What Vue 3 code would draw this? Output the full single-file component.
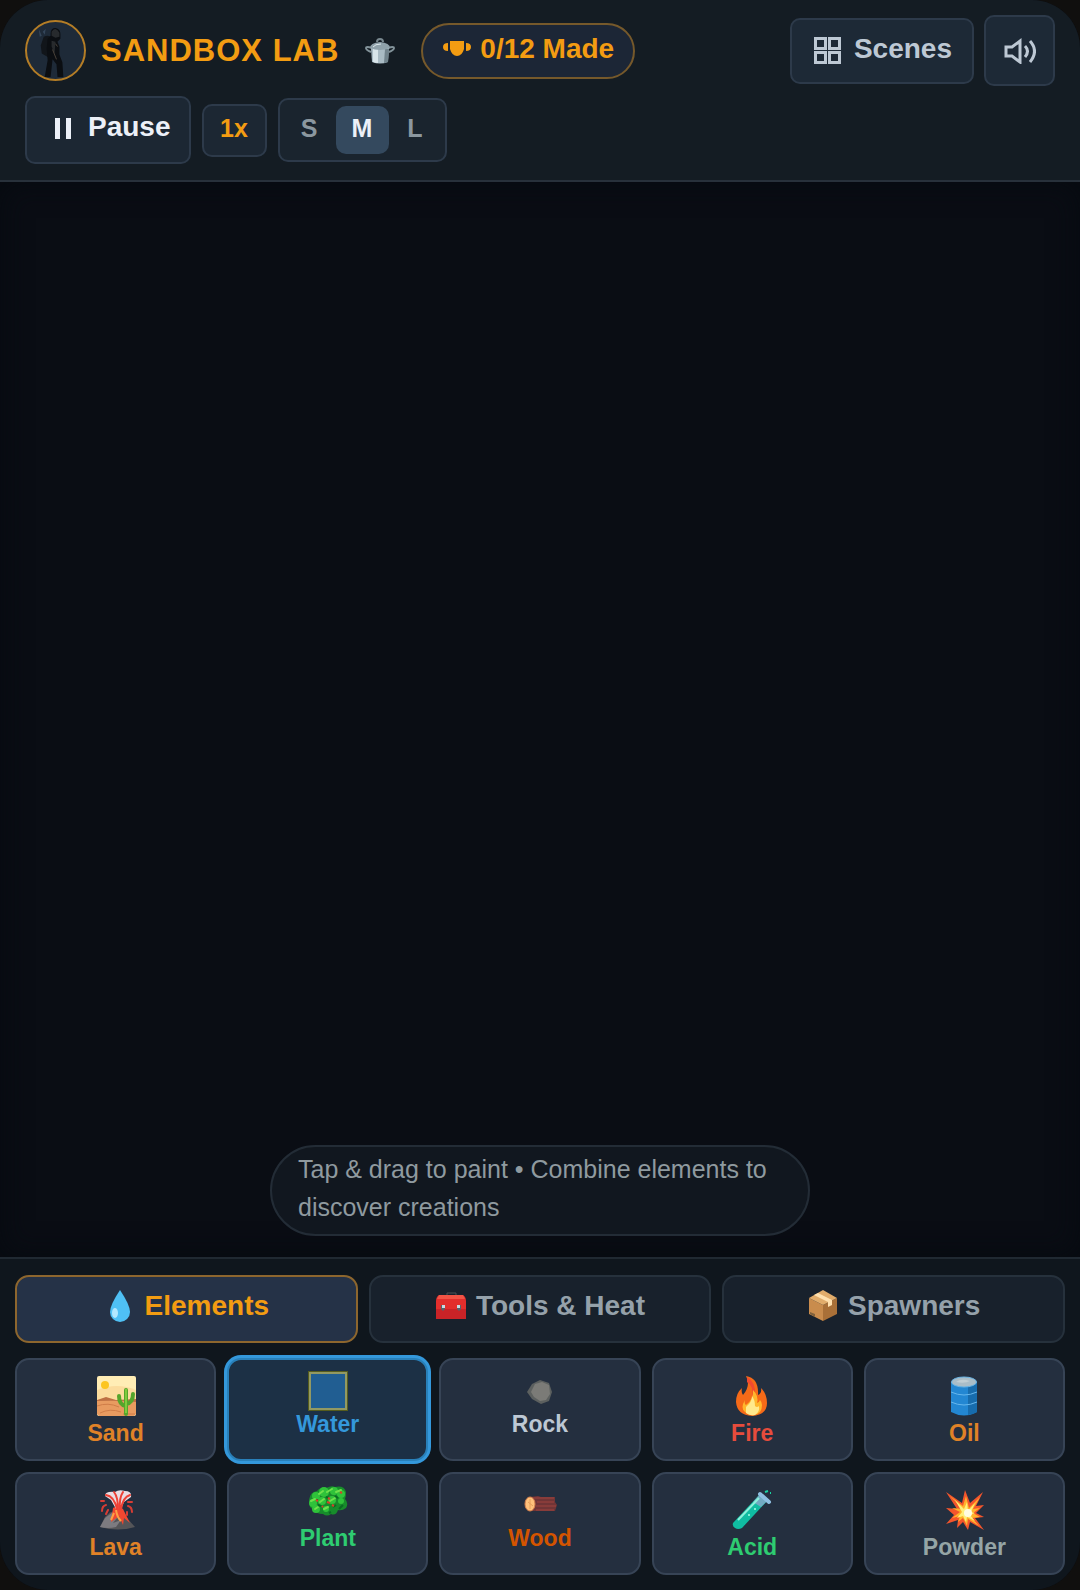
<template>
  <div class="app">
    <header class="topbar">
      <div class="row">
        <div class="avatar">
          <svg viewBox="0 0 58 58" aria-hidden="true">
            <path d="M12 7l3 7-2 1zM16 10l3-3-1 6z" fill="#34465a" />
            <path d="M17 15q6-3 9 2l-1 15-3 4-7-4-1-8z" fill="#11151a" />
            <path d="M24 12q0-6 5-6 5 1 5 6v5l-3 3 2 5v8l3 8 1 15h-6l-1-13-4-5-1 9-1 9h-6l3-17-1-12 1-10 3-3z" fill="#0b0e12" />
            <path d="M25 10q4-6 8 1v4l-4 1-4-2zM25 19l4 1-1 12-3-7z" fill="#272a2d" />
            <path d="M26 28l4 10M29 22l2 3" stroke="#4b433b" fill="none" />
          </svg>
        </div>
        <h1>SANDBOX LAB</h1>
        <svg class="pot" viewBox="0 0 30 28" aria-hidden="true">
          <path d="M7 11Q1 9 1 11q0 2 5 4M23 11q6-2 6 0 0 2-5 4" fill="none" stroke="#829299" stroke-width="2" />
          <path d="M6 11h18l-1 14q-8 3-16 0z" fill="#a9bbc4" />
          <path d="M8 12h5v14q-3 0-5-1z" fill="#d8e5ea" />
          <path d="M20 12h4l-1 13-4 1z" fill="#71838c" />
          <path d="M5 11q0-5 10-6 10 1 10 6-10 4-20 0z" fill="#8fa1aa" />
          <path d="M8 10q2-3 8-3" stroke="#dce7eb" fill="none" />
          <path d="M12 5q0-3 3-3t3 3" stroke="#78878e" stroke-width="2" fill="none" />
        </svg>
        <button class="badge">
          <svg viewBox="0 0 28 20" aria-hidden="true">
            <path d="M7 2h14v8q-2 7-7 7t-7-7z" />
            <path d="M5 4v8Q0 12 0 8q0-4 5-4zM23 4v8q5 0 5-4 0-4-5-4z" />
          </svg>
          <span>0/12 Made</span>
        </button>
        <div class="right">
          <button class="scenes">
            <svg viewBox="0 0 27 27" aria-hidden="true">
              <path d="M1.5 1.5h10v10h-10zM15.500 1.500h10v10h-10zM1.500 15.500h10v10h-10zM15.500 15.500h10v10h-10z" />
            </svg>
            <span>Scenes</span>
          </button>
          <button class="sound" aria-label="Sound" @click="muted = !muted">
            <svg viewBox="0 0 32 26" aria-hidden="true">
              <path d="M2 9h6l8-6v21l-8-6H2z" />
              <path v-if="!muted" d="M21 8q5 5 0 11M26 3q9 10 0 21" />
            </svg>
          </button>
        </div>
      </div>
      <div class="row controls">
        <button class="pause" @click="paused = !paused">
          <svg viewBox="0 0 24 24" aria-hidden="true">
            <path v-if="!paused" d="M4 1h5v21H4zM15 1h5v21h-5z" />
            <path v-else d="M5 1l16 11L5 23z" />
          </svg>
          <span>{{ paused ? 'Play' : 'Pause' }}</span>
        </button>
        <button class="speed" @click="speed = speed % 3 + 1">{{ speed }}x</button>
        <div class="sizes">
          <button v-for="s in sizes" :key="s" :class="{ active: s === size }" @click="size = s">{{ s }}</button>
        </div>
      </div>
    </header>

    <main class="stage">
      <p class="hint">Tap &amp; drag to paint • Combine elements to discover creations</p>
    </main>

    <footer class="panel">
      <nav class="tabs">
        <button v-for="t in tabs" :key="t.id" :class="{ active: t.id === tab }" @click="tab = t.id">
          <svg v-if="t.id === 'elements'" viewBox="0 0 32 32" aria-hidden="true">
            <path d="M16 0q-10 15-10 22a10 10 0 0 0 20 0Q26 15 16 0z" fill="#4fc0f5" />
            <ellipse cx="11" cy="23" rx="3" ry="5" fill="#b4e8ff" />
          </svg>
          <svg v-else-if="t.id === 'tools'" viewBox="0 0 32 32" aria-hidden="true">
            <path d="M12 6V3h9v3" fill="none" stroke="#4c5355" stroke-width="1" />
            <path d="M4 5h24q3 2 3 6v18H1V11q0-4 3-6z" fill="#e32e2c" />
            <path d="M4 5h24l2 4H2z" fill="#f15345" />
            <path d="M1 19h30v10H1z" fill="#c92327" />
            <path d="M6 15h4v4l-2 2-2-2zM22 15h4v4l-2 2-2-2z" fill="#58636a" />
            <path d="M7 15h3v3H7zM22 15h3v3h-3z" fill="#c7dce4" />
          </svg>
          <svg v-else viewBox="0 0 32 32" aria-hidden="true">
            <path d="M2 8l14 7v16L2 24z" fill="#c98c4d" />
            <path d="M30 8l-14 7v16l14-7z" fill="#a97038" />
            <path d="M2 8l14-8 14 8-14 7z" fill="#e1ac6b" />
            <path d="M7 5l4-2 14 7v5l-4 2v-5z" fill="#ffe0ae" />
            <path d="M3 22l5 2v3l-5-3z" fill="#80613c" />
          </svg>
          <span>{{ t.name }}</span>
        </button>
      </nav>

      <div class="grid">
        <button
          v-for="e in elements"
          :key="e.name"
          class="element"
          :class="[e.name.toLowerCase(), { compact: e.compact, selected: e.name === selected }]"
          @click="selected = e.name"
        >
          <svg viewBox="0 0 40 40" aria-hidden="true">
            <g v-if="e.name === 'Sand'">
              <rect x="1" width="39" height="40" rx="2" fill="#ffedb5" />
              <path d="M1 14q20-8 39 0v10H1z" fill="#fbdc9d" />
              <circle cx="9" cy="9" r="4" fill="#fcc522" />
              <path d="M1 24l9-3 10 3 20-1v6H1z" fill="#bd7043" />
              <path d="M1 25q20-1 39 1v12l-2 2H3l-2-2z" fill="#e89b60" />
              <path d="M1 30q11-4 22 1M4 37q10-5 21-1M27 38h12" stroke="#d07d48" fill="none" />
              <path d="M30 38V14M30 30q-7-1-7-10M30 28q7-1 7-10" stroke="#55a52c" stroke-width="4" stroke-linecap="round" fill="none" />
              <path d="M30 37V13" stroke="#7fcb3c" stroke-width="2" />
            </g>
            <g v-else-if="e.name === 'Water'">
              <rect width="40" height="40" fill="#565c1d" />
              <rect x="1" y="1" width="38" height="38" fill="#929963" />
              <rect x="3" y="3" width="34" height="34" fill="#215e92" />
            </g>
            <g v-else-if="e.name === 'Rock'">
              <path d="M7 21l5-8 8-4 9 3 3 9-3 9-8 3-9-5z" fill="#5c605f" />
              <path d="M11 21l4-8 7-2 7 3 1 9-4 6-6 1-6-4z" fill="#7b7b77" />
            </g>
            <g v-else-if="e.name === 'Fire'" transform="translate(4 0)">
              <path d="M10 0q13 2 12 19 4-2 3-7 6 6 6 15 0 12-15 13Q1 39 0 26q0-9 6-14-1 5 1 7Q15 10 10 0z" fill="#f56a18" />
              <path d="M11 1q9 5 8 18l-3 2Q18 10 11 6z" fill="#f14a30" />
              <path d="M17 14q1 9-7 15-2-1-1-5-5 8 0 12 4 4 9 3 8-1 8-10 0-3-2-5-1 3-3 3 2-7-4-13z" fill="#ffb72c" />
              <path d="M16 20q0 6-6 11v6q4 3 9 2 5-3 4-9-2 2-4 0 0-6-3-10z" fill="#ffe98c" />
            </g>
            <g v-else-if="e.name === 'Oil'">
              <path d="M7 6v30q13 7 26 0V6z" fill="#2387d2" />
              <path d="M24 6h9v30q-4 3-9 3z" fill="#176cad" />
              <ellipse cx="20" cy="6" rx="12.500" ry="5" fill="#a9bdc8" stroke="#69b4e4" />
              <path d="M12 6q5-4 14-1-5 3-14 1z" fill="#c0ced4" />
              <path d="M7 16q13 6 26 0M7 26q13 6 26 0" stroke="#67b7ec" fill="none" />
            </g>
            <g v-else-if="e.name === 'Lava'" transform="translate(2 0)">
              <path d="M2 37l5-10q10-12 21 0l9 10q-17 5-35 0z" fill="#555558" />
              <path d="M2 37l5-9 8-6 4 6-4 5 8-3-5 7q-8 2-16 0z" fill="#7d7b80" />
              <path d="M15 18q5-3 10 1l7 14-6-5-1 7-4-9-8 6z" fill="#f04730" />
              <path d="M18 20q1 7 5 11M16 23l-3 7" stroke="#ff9f44" stroke-width="2" fill="none" />
              <path d="M7 6q0-5 10-4 4-3 10-1 7 0 6 6l-7 5-3 7h-5L13 10z" fill="#e8dce2" />
              <path d="M8 5q8 1 11 14M16 2q4 5 4 17M25 2q-4 6-3 17M32 5q-7 2-9 14" stroke="#ed4135" stroke-width="2" stroke-linecap="round" fill="none" />
              <path d="M6 11H3M8 15q-4 1-4 6M30 12h4M30 16q4 1 4 6M10 20l-2 4M29 22v3" stroke="#d83c34" stroke-width="2" stroke-linecap="round" fill="none" />
            </g>
            <g v-else-if="e.name === 'Plant'">
              <path d="M1 15q1-8 8-9 4-5 9-3 6-3 9-1 9-2 11 5 0 5-1 7 4 4 1 9-4 3-8 2-2 6-7 4-4 3-8 0-7 0-8-4-7-2-5-7z" fill="#178c2b" />
              <g fill="#2fc23a">
                <circle cx="8" cy="11" r="4" /><circle cx="16" cy="7" r="5" /><circle cx="26" cy="6" r="4" />
                <circle cx="33" cy="9" r="4" /><circle cx="5" cy="18" r="4" /><circle cx="14" cy="16" r="4" />
                <circle cx="24" cy="15" r="4" /><circle cx="8" cy="24" r="4" /><circle cx="18" cy="24" r="3" />
                <circle cx="33" cy="16" r="3" />
              </g>
              <path d="M3 16l4-2M11 9l4-3M19 7l5-3M28 7l5-2M12 17l4-3M22 16l5-3M7 24l3-2M16 24l4-2" stroke="#6fe04c" stroke-width="2" stroke-linecap="round" />
              <path d="M10 20l3 1M18 12l3 1M27 11l3 2M28 20l-3 2M23 27l-2 1M35 20l-4 4M8 15h2" stroke="#0b6a24" stroke-width="2" />
              <path d="M8 15l2 1M20 13l2 1M19 17l3 1M32 7l2 1M24 20l2 1M14 21l1 1" stroke="#d8402a" stroke-width="2" />
            </g>
            <g v-else-if="e.name === 'Wood'">
              <path d="M10 12l8-1 3 1h14v5l2 3-2 6H10z" fill="#713536" />
              <path d="M13 13h21M17 17h17M16 21h20M16 25h18" stroke="#a0443f" stroke-width="1" fill="none" />
              <ellipse cx="10" cy="19" rx="5" ry="7" fill="#ffc27b" stroke="#d5804c" />
              <path d="M10 14v10M8 17l5 4" stroke="#e6a05a" fill="none" />
            </g>
            <g v-else-if="e.name === 'Acid'">
              <path d="M1 33L28 4l7 7L10 38q-4 2-7 0t-2-5z" fill="#10bca2" />
              <path d="M21 12l7-8 7 7-6 6z" fill="#72a9c1" />
              <path d="M6 30L27 8" stroke="#8bf0da" stroke-width="2" />
              <path d="M28 4l9 8" stroke="#8ebee0" stroke-width="4" stroke-linecap="round" />
              <circle cx="23" cy="19" r="1" fill="#a5ffe4" />
              <circle cx="17" cy="25" r="1" fill="#a5ffe4" />
              <path d="M33 2l3-1M38 3h1" stroke="#19d2a3" stroke-width="2" />
            </g>
            <g v-else transform="translate(2 0)">
              <path d="M0 2l16 11 3-13 5 13L37 2l-7 14 8-1-8 8 8 4-9 1 9 12-14-8-2 8-5-8-6 6 1-8-12 4 8-9-8-7 11 1z" fill="#f3552c" />
              <path d="M4 6l13 10 3-10 3 12L34 7l-7 12 7-1-7 5 7 4-8 1 7 8-11-7-1 7-4-8-5 4 2-6-8 2 8-6-8-4 11 1z" fill="#ffb32c" />
              <path d="M9 10l9 9 3-7 1 9 7-8-4 9 4 1-5 2 5 6-8-4-1 5-3-6-6 2 5-6z" fill="#fff07b" />
              <circle cx="22" cy="23" r="4" fill="#fffce2" />
            </g>
          </svg>
          <span>{{ e.name }}</span>
        </button>
      </div>
    </footer>
  </div>
</template>

<script setup>
import { ref } from 'vue'

const sizes = ['S', 'M', 'L']
const tabs = [
  { id: 'elements', name: 'Elements' },
  { id: 'tools', name: 'Tools & Heat' },
  { id: 'spawners', name: 'Spawners' },
]
const elements = [
  { name: 'Sand' },
  { name: 'Water', compact: true },
  { name: 'Rock', compact: true },
  { name: 'Fire' },
  { name: 'Oil' },
  { name: 'Lava' },
  { name: 'Plant', compact: true },
  { name: 'Wood', compact: true },
  { name: 'Acid' },
  { name: 'Powder' },
]

const paused = ref(false)
const muted = ref(false)
const speed = ref(1)
const size = ref('M')
const tab = ref('elements')
const selected = ref('Water')
</script>

<style>
body {
  margin: 0;
  background: #100f0e;
}
</style>

<style scoped>
* {
  box-sizing: border-box;
}

.app {
  display: flex;
  flex-direction: column;
  min-height: 100vh;
  border-radius: 48px;
  overflow: hidden;
  background: #0a0d14;
  font-family: "Liberation Sans", Arial, sans-serif;
}

svg {
  display: block;
  flex-shrink: 0;
}

button {
  display: flex;
  align-items: center;
  justify-content: center;
  margin: 0;
  padding: 0;
  border: 2px solid #2d3a4a;
  border-radius: 10px;
  background: #1c2733;
  color: #bdc8d4;
  font-family: inherit;
  font-size: 28px;
  font-weight: bold;
  line-height: 32px;
  white-space: nowrap;
  cursor: pointer;
}

.topbar {
  display: flex;
  flex-direction: column;
  gap: 10px;
  padding: 15px 25px 16px;
  background: #141c23;
  border-bottom: 2px solid #28313b;
}

.row {
  display: flex;
  align-items: center;
}

.avatar {
  width: 61px;
  height: 61px;
  border: 2px solid #b47d26;
  border-radius: 50%;
  background: #1e2a38;
  overflow: hidden;
}

h1 {
  margin: 0 0 0 15px;
  color: #f39c12;
  font-size: 31px;
  line-height: 36px;
  letter-spacing: 1px;
  white-space: nowrap;
}

.pot {
  width: 30px;
  margin: 0 26px;
}

.badge {
  height: 56px;
  gap: 9px;
  padding: 0 19px 4px 20px;
  border-color: #76592b;
  border-radius: 28px;
  background: #1c2636;
  color: #f39c12;
}

.badge svg {
  width: 28px;
  fill: #f39c12;
}

.right {
  display: flex;
  align-items: center;
  gap: 10px;
  margin-left: auto;
}

.right svg {
  fill: none;
  stroke: #bdc8d4;
  stroke-width: 3;
}

.scenes {
  height: 66px;
  gap: 13px;
  padding: 0 20px 0 22px;
  background: #1d2936;
}

.scenes svg {
  width: 27px;
}

.scenes span,
.pause span {
  padding-bottom: 4px;
}

.sound {
  width: 71px;
  height: 71px;
  background: #1d2936;
}

.sound svg {
  width: 32px;
}

.controls {
  gap: 11px;
}

.pause {
  height: 68px;
  gap: 13px;
  padding: 0 18px 2px 24px;
  color: #ecf0f8;
}

.pause svg {
  width: 24px;
  fill: #ecf0f8;
}

.speed {
  width: 65px;
  height: 53px;
  padding-bottom: 4px;
  color: #f39c12;
  font-size: 25px;
}

.sizes {
  display: flex;
  padding: 6px 3px;
  border: 2px solid #2d3a4a;
  border-radius: 10px;
  background: #1a242e;
}

.sizes button {
  width: 53px;
  height: 48px;
  padding-bottom: 4px;
  border: 0;
  background: none;
  color: #8b979f;
  font-size: 25px;
}

.sizes button.active {
  background: #34495e;
  color: #ecf0f8;
}

.stage {
  position: relative;
  flex: 1;
  min-height: 240px;
  background: #0a0d14;
  box-shadow: inset 0 0 30px #060a10;
}

.hint {
  position: absolute;
  bottom: 21px;
  left: 50%;
  transform: translateX(-50%);
  margin: 0;
  padding: 3px 26px 8px;
  border: 2px solid #232c36;
  border-radius: 46px;
  background: #11171f;
  color: #8f9a9f;
  font-size: 25px;
  line-height: 38px;
}

.panel {
  padding: 16px 15px 15px;
  border-top: 2px solid #202932;
  background: #0f161d;
}

.tabs {
  display: grid;
  grid-template-columns: repeat(3, 1fr);
  gap: 11px;
  margin-bottom: 15px;
}

.tabs button {
  height: 68px;
  gap: 9px;
  padding-bottom: 6px;
  border-color: #26313c;
  border-radius: 14px;
  background: #18212c;
  color: #95a1aa;
}

.tabs button.active {
  border-color: #8d662e;
  background: #253247;
  color: #f39c12;
}

.tabs svg {
  width: 32px;
}

.grid {
  display: grid;
  grid-template-columns: repeat(5, 1fr);
  gap: 11px;
}

.element {
  flex-direction: column;
  justify-content: flex-start;
  gap: 4px;
  min-height: 103px;
  padding-top: 16px;
  border-color: #374456;
  border-radius: 14px;
  background: #242f3f;
  font-size: 23px;
  line-height: 26px;
}

.element.compact {
  gap: 0;
  padding-top: 11px;
}

.element svg {
  width: 40px;
}

.element.selected {
  border-color: #2980b9;
  background: #1c3045;
  box-shadow: 0 0 0 3px #3498db;
}

.sand,
.oil,
.lava {
  color: #e08227;
}

.water {
  color: #3498db;
}

.fire {
  color: #e74c3c;
}

.plant,
.acid {
  color: #2ecc71;
}

.wood {
  color: #d35400;
}

.powder {
  color: #95a5a6;
}
</style>
